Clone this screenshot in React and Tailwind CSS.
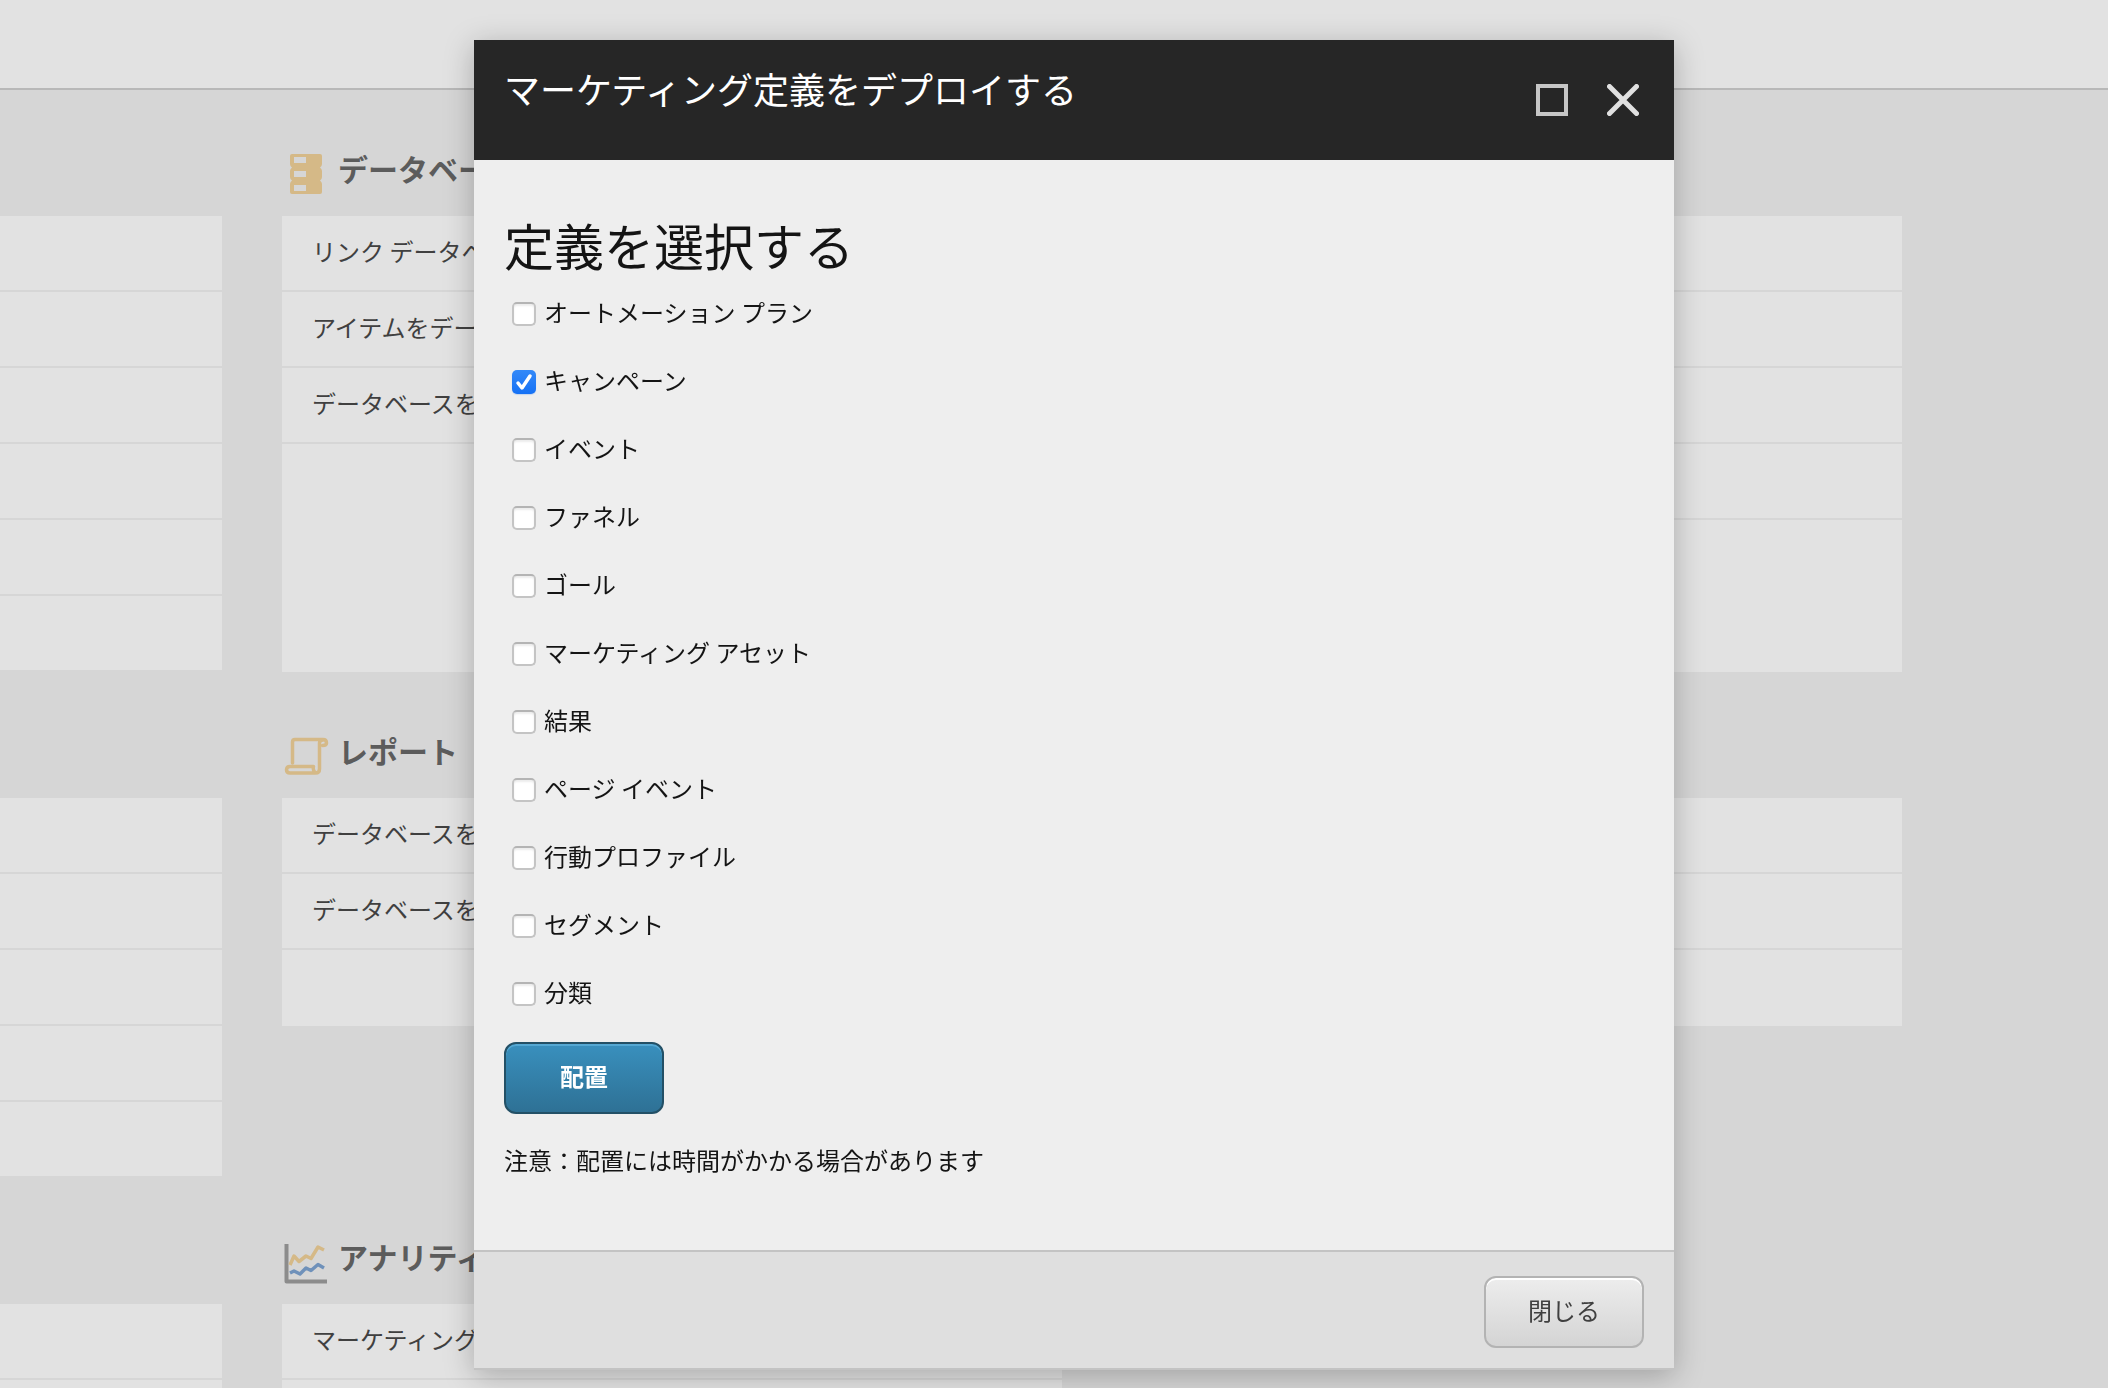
import React, { useState } from 'react';

const definitions = [
    'オートメーション プラン',
    'キャンペーン',
    'イベント',
    'ファネル',
    'ゴール',
    'マーケティング アセット',
    '結果',
    'ページ イベント',
    '行動プロファイル',
    'セグメント',
    '分類',
];

const DatabaseIcon = () => (
    <svg className="w-12 h-12" viewBox="0 0 48 48" fill="#d5b987" aria-hidden="true">
        <path fillRule="evenodd" d="M10 4h28q2 0 2 2v8q0 2-2 3.500q2 1.500 2 3.500v6q0 2-2 3.500q2 1.500 2 3.500v8q0 2-2 2H10q-2 0-2-2v-8q0-2 2-3.500q-2-1.500-2-3.500v-6q0-2 2-3.500q-2-1.500-2-3.500V6q0-2 2-2zM12 7v6h12V7zM12 21v6h12v-6zM12 35v6h12v-6z" />
    </svg>
);

const ReportIcon = () => (
    <svg className="w-12 h-12" viewBox="0 0 48 48" fill="none" stroke="#d5b987" strokeWidth="3.500" strokeLinecap="round" strokeLinejoin="round" aria-hidden="true">
        <path d="M10.500 31V10q0-2.500 2.500-2.500h28q3.500 0 3.500 3.500q0 2.500-4 2.500" />
        <path d="M40.500 8q-3 .5-3 3v26q0 4-4 4H8q-3.500 0-3.500-3.200T8 34.500h23.500q-1 3 1.500 6" />
    </svg>
);

const AnalyticsIcon = () => (
    <svg className="w-12 h-12" viewBox="0 0 48 48" fill="none" strokeWidth="4" strokeLinejoin="round" aria-hidden="true">
        <path stroke="#8c8c8c" d="M4.500 6v37.500H45" />
        <path stroke="#d5b987" strokeWidth="3.500" d="M8 27l4-9 5 5.500 7-5.500 5 2.500 7-11.500 6 3" />
        <path stroke="#6f91ba" strokeWidth="3.500" d="M8 35l4-2 6 3 6-6 5 2.500 7-6 6 3.500" />
    </svg>
);

const Section = ({ icon, title, items, tall, medium }) => (
    <section>
        <div className="h-[126px] pt-[60px] flex gap-2">
            {icon}
            {title && (
                <h2 className="h-12 leading-9 text-[30px] font-bold text-[#5c5c5c] whitespace-nowrap">{title}</h2>
            )}
        </div>
        <ul className={`bg-[#e2e2e2] ${tall ? 'min-h-[456px]' : ''} ${medium ? 'min-h-[228px]' : ''}`}>
            {items.map((item, i) => (
                <li key={i} className="h-[76px] border-b-2 border-[#d6d6d6] px-[30px] overflow-hidden">
                    {item && (
                        <a href="#" className="block leading-[70px] text-2xl text-[#404040] whitespace-nowrap">{item}</a>
                    )}
                </li>
            ))}
        </ul>
    </section>
);

const Launchpad = () => (
    <div className="h-screen overflow-hidden bg-[#d6d6d6]">
        <header className="h-[90px] bg-[#e2e2e2] border-b-2 border-[#b8b8b8]" />
        <main className="grid grid-cols-[222fr_780fr_780fr] gap-x-[60px] pr-[206px] items-start">
            <Section items={['', '', '', '', '', '']} />
            <Section
                icon={<DatabaseIcon />}
                title="データベー"
                items={['リンク データベ', 'アイテムをデー', 'データベースを']}
                tall
            />
            <Section items={['', '', '', '']} tall />

            <Section items={['', '', '', '', '']} />
            <Section icon={<ReportIcon />} title="レポート" items={['データベースを', 'データベースを']} medium />
            <Section items={['', '']} medium />

            <Section items={['', '']} />
            <Section icon={<AnalyticsIcon />} title="アナリティ" items={['マーケティング', '']} />
        </main>
    </div>
);

const DefinitionCheckbox = ({ label, checked, onChange }) => (
    <label className="h-[68px] flex items-start gap-2 text-2xl text-[#141414]">
        <span className="relative w-6 h-6 mt-1 ml-2 flex-shrink-0">
            <input
                type="checkbox"
                checked={checked}
                onChange={onChange}
                className="block w-6 h-6 appearance-none rounded-[5px] border-2 border-[#c4c4c4] border-t-[#b4b4b4] bg-white shadow-[inset_0_2px_2px_#ededed] checked:border-0 checked:bg-linear-to-b checked:from-[#3389f8] checked:to-[#1471f5] checked:shadow-[0_1px_1px_#c4d4ec]"
            />
            {checked && (
                <svg className="absolute inset-0 w-6 h-6 pointer-events-none" viewBox="0 0 24 24" fill="none" stroke="white" strokeWidth="3.500" strokeLinecap="round" strokeLinejoin="round">
                    <path d="M6 13l4 5L18 6" />
                </svg>
            )}
        </span>
        <span className="leading-7">{label}</span>
    </label>
);

const DeployDialog = () => {
    const [selected, setSelected] = useState(['キャンペーン']);

    const toggle = (name) => {
        setSelected(selected.includes(name) ? selected.filter((s) => s !== name) : [...selected, name]);
    };

    return (
        <div className="fixed inset-0 pt-10 pl-10 flex justify-center items-start">
            <div role="dialog" aria-labelledby="dialog-title" className="w-full max-w-[1200px] bg-[#eeeeee] shadow-[0_6px_28px_rgba(0,0,0,0.25)]">
                <div className="h-[120px] bg-[#262626] pl-[30px] pr-[35px] flex justify-between">
                    <h1 id="dialog-title" className="pt-6 leading-[48px] text-4xl text-white">マーケティング定義をデプロイする</h1>
                    <div className="pt-11 flex gap-[39px] items-start">
                        <button type="button" aria-label="最大化" className="w-8 h-8 border-4 border-[#c6c6c6]" />
                        <button type="button" aria-label="閉じる" className="w-8 h-8">
                            <svg className="w-8 h-8" viewBox="0 0 32 32" fill="none" stroke="#e0e0e0" strokeWidth="5" strokeLinecap="round">
                                <path d="M2.500 2.500l27 27M29.500 2.500l-27 27" />
                            </svg>
                        </button>
                    </div>
                </div>

                <form className="px-[30px] pt-12 pb-[68px]" onSubmit={(e) => e.preventDefault()}>
                    <h2 className="h-[90px] leading-[72px] text-[50px] text-[#141414]">定義を選択する</h2>
                    {definitions.map((name) => (
                        <DefinitionCheckbox
                            key={name}
                            label={name}
                            checked={selected.includes(name)}
                            onChange={() => toggle(name)}
                        />
                    ))}
                    <button
                        type="submit"
                        className="block w-40 h-[72px] mt-[-4px] pb-1 rounded-xl border-2 border-[#235066] bg-linear-to-b from-[#3990be] to-[#2e7195] shadow-[inset_0_2px_0_#55a8d3] text-2xl font-bold text-white"
                    >
                        配置
                    </button>
                    <p className="mt-7 h-10 leading-[36px] text-2xl text-[#141414]">注意：配置には時間がかかる場合があります</p>
                </form>

                <div className="h-[120px] px-[30px] pt-6 flex justify-end items-start bg-[#dfdfdf] border-y-2 border-[#c3c3c3]">
                    <button
                        type="button"
                        className="w-40 h-[72px] pb-1 rounded-xl border-2 border-[#b3b3b3] bg-linear-to-b from-[#ededed] to-[#d4d4d4] shadow-[inset_0_2px_0_#ffffff] text-2xl text-[#404040]"
                    >
                        閉じる
                    </button>
                </div>
            </div>
        </div>
    );
};

const App = () => (
    <div lang="ja" className="font-['Noto_Sans_CJK_JP',sans-serif]">
        <Launchpad />
        <DeployDialog />
    </div>
);

export default App;
